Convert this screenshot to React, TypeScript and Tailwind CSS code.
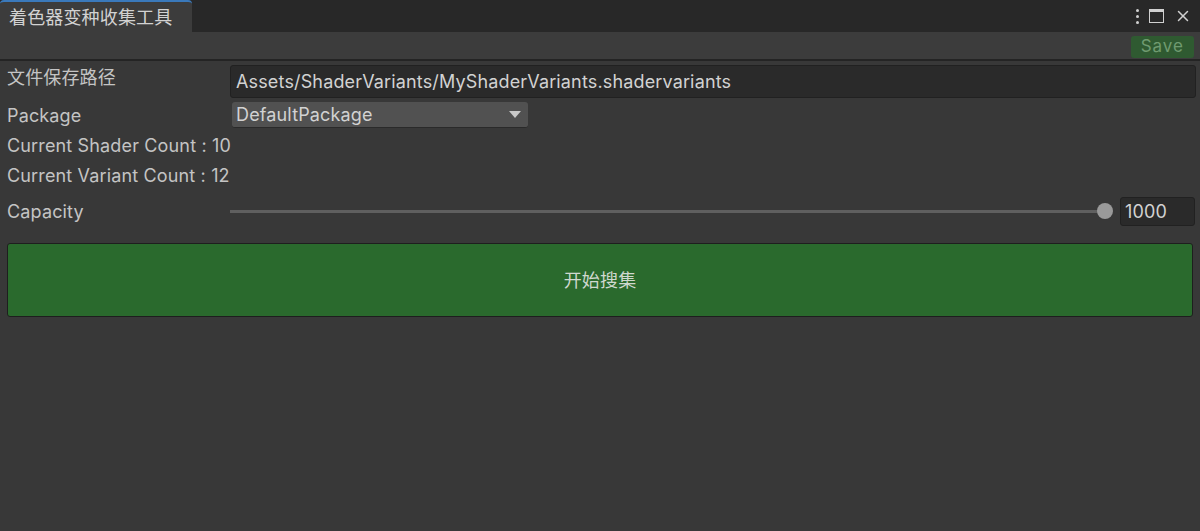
import { X } from 'lucide-react';

const font = { fontFamily: 'Inter, "Noto Sans CJK SC", sans-serif' };

export default function App() {
  return (
    <div className="w-[1200px] h-[531px] bg-[#383838] text-[#c4c4c4] text-[18px] tracking-[0.15px] flex flex-col overflow-hidden" style={font}>
      {/* Tab bar */}
      <div className="h-[32px] bg-[#282828] flex items-stretch">
        <div className="w-[192px] bg-[#3c3c3c] border-t-2 border-[#3a79bb] rounded-tl-[4px] rounded-tr-[4px] flex items-center pl-[9px] text-[#d2d2d2]">
          着色器变种收集工具
        </div>
        <div className="flex-1" />
        <div className="flex items-center gap-[10px] pr-[8px] text-[#d0d0d0]">
          <div className="flex flex-col gap-[3px] items-center">
            <span className="w-[3px] h-[3px] bg-[#d0d0d0] rounded-full" />
            <span className="w-[3px] h-[3px] bg-[#d0d0d0] rounded-full" />
            <span className="w-[3px] h-[3px] bg-[#d0d0d0] rounded-full" />
          </div>
          <div className="w-[15px] h-[14px] border-[1.5px] border-t-[3px] border-[#d0d0d0]" />
          <X className="w-[18px] h-[18px]" strokeWidth={2} />
        </div>
      </div>

      {/* Toolbar */}
      <div className="h-[29px] bg-[#3c3c3c] flex items-center justify-end pr-[6px] pt-[3px] border-b-2 border-[#242424]">
        <div className="h-[22px] px-[10px] bg-[#2f5a31] rounded-[3px] text-[#6f9a70] text-[17px] tracking-[1px] flex items-center">Save</div>
      </div>

      {/* Content */}
      <div className="flex flex-col px-[7px] pt-[3px]">
        <div className="flex items-center h-[34px]">
          <div className="w-[223px] -mt-[8px]">文件保存路径</div>
          <div className="flex-1 h-[33px] bg-[#2a2a2a] border border-[#212121] rounded-[3px] flex items-center px-[5px] text-[#d2d2d2] mr-[-3px]">
            Assets/ShaderVariants/MyShaderVariants.shadervariants
          </div>
        </div>
        <div className="flex items-center h-[30px] mt-[2px]">
          <div className="w-[225px]">Package</div>
          <div className="w-[296px] h-[26px] bg-[#515151] border-b border-[#2a2a2a] rounded-[3px] flex items-center justify-between px-[4px] pr-[7px] text-[#d2d2d2]">
            <span>DefaultPackage</span>
            <svg width="12" height="8" viewBox="0 0 12 8"><path d="M0 0h12L6 7z" fill="#c8c8c8" /></svg>
          </div>
        </div>
        <div className="h-[30px] flex items-center">Current Shader Count : 10</div>
        <div className="h-[30px] flex items-center">Current Variant Count : 12</div>
        <div className="flex items-center h-[38px] mt-[2px]">
          <div className="w-[223px]">Capacity</div>
          <div className="flex-1 flex items-center">
            <div className="flex-1 h-[3px] bg-[#5f5f5f]" />
            <div className="w-[16px] h-[16px] rounded-full bg-[#9a9a9a] -ml-[8px]" />
          </div>
          <div className="w-[75px] h-[29px] ml-[7px] bg-[#2a2a2a] border border-[#212121] rounded-[3px] flex items-center px-[4px] text-[#d2d2d2] mr-[-2px]">1000</div>
        </div>
        <button className="mt-[13px] h-[74px] bg-[#2a6a2d] border border-[#1e1e1e] rounded-[3px] text-[#cfd8cf] text-[18px] flex items-center justify-center">
          开始搜集
        </button>
      </div>
    </div>
  );
}
